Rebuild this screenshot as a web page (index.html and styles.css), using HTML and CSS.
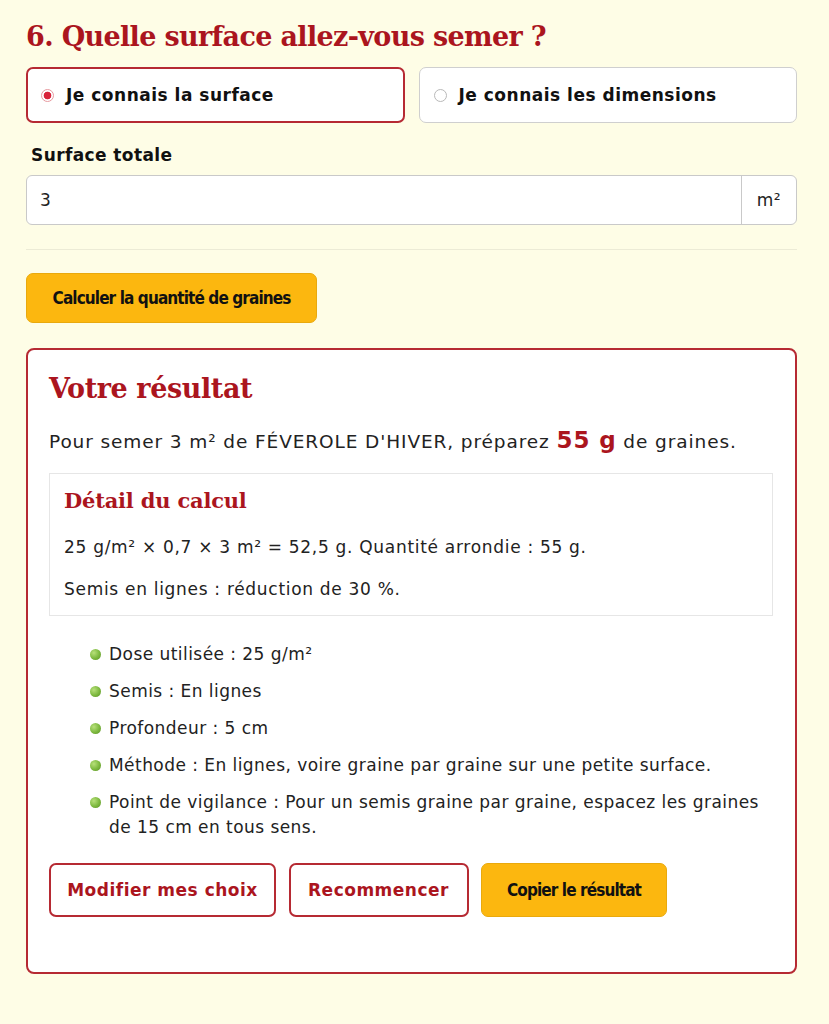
FILE: index.html
```html
<!DOCTYPE html>
<html lang="fr">
<head>
<meta charset="utf-8">
<title>Quelle surface allez-vous semer ?</title>
<link rel="stylesheet" href="styles.css">
</head>
<body>
<main class="wrap">
  <h2 class="step-title">6. Quelle surface allez-vous semer ?</h2>

  <div class="choices">
    <label class="choice is-selected">
      <span class="radio radio-on"></span>
      <span class="choice-text">Je connais la surface</span>
    </label>
    <label class="choice">
      <span class="radio"></span>
      <span class="choice-text">Je connais les dimensions</span>
    </label>
  </div>

  <div class="field">
    <div class="field-label">Surface totale</div>
    <div class="input-group">
      <div class="input">3</div>
      <div class="addon">m²</div>
    </div>
  </div>

  <hr class="divider">

  <button class="btn btn-primary btn-calc">Calculer la quantité de graines</button>

  <section class="result">
    <h2 class="result-title">Votre résultat</h2>
    <p class="result-summary">Pour semer 3 m² de FÉVEROLE D'HIVER, préparez <strong class="qty">55 g</strong> de graines.</p>

    <div class="detail">
      <h3 class="detail-title">Détail du calcul</h3>
      <p>25 g/m² × 0,7 × 3 m² = 52,5 g. Quantité arrondie : 55 g.</p>
      <p>Semis en lignes : réduction de 30 %.</p>
    </div>

    <ul class="facts">
      <li>Dose utilisée : 25 g/m²</li>
      <li>Semis : En lignes</li>
      <li>Profondeur : 5 cm</li>
      <li>Méthode : En lignes, voire graine par graine sur une petite surface.</li>
      <li>Point de vigilance : Pour un semis graine par graine, espacez les graines de 15 cm en tous sens.</li>
    </ul>

    <div class="actions">
      <button class="btn btn-outline btn-modify">Modifier mes choix</button>
      <button class="btn btn-outline btn-restart">Recommencer</button>
      <button class="btn btn-primary btn-copy">Copier le résultat</button>
    </div>
  </section>
</main>
</body>
</html>
```

FILE: styles.css
```css
html, body {
  margin: 0;
  padding: 0;
}
body {
  background: #fefde6;
  font-family: "DejaVu Sans", Verdana, sans-serif;
  color: #222;
}
.wrap {
  width: 771px;
  margin-left: 26px;
  padding-top: 18px;
  padding-bottom: 51px;
}
.step-title {
  font-family: "DejaVu Serif", Georgia, serif;
  font-weight: bold;
  font-size: 27px;
  color: #ab151e;
  margin: 0 0 11px 0;
  line-height: 38px;
  letter-spacing: -0.65px;
}
.choices {
  display: grid;
  grid-template-columns: 1fr 1fr;
  gap: 14px;
}
.choice {
  display: flex;
  align-items: center;
  gap: 12px;
  height: 56px;
  box-sizing: border-box;
  background: #fff;
  border: 1px solid #cfcfcf;
  border-radius: 7px;
  padding: 0 0 0 14px;
}
.choice.is-selected {
  border: 2px solid #b62a33;
  padding-left: 13px;
}
.radio {
  width: 13px;
  height: 13px;
  border-radius: 50%;
  border: 1px solid #b9b9b9;
  box-sizing: border-box;
  background: #fff;
  flex: none;
}
.radio-on {
  border: 1px solid #e79aa0;
  background: radial-gradient(circle, #d8233a 0 3.5px, #fff 4.2px);
}
.choice-text {
  font-weight: bold;
  font-size: 17px;
  letter-spacing: 0.5px;
  color: #111;
}
.field {
  margin-top: 22px;
}
.field-label {
  font-weight: bold;
  font-size: 17px;
  letter-spacing: 0.4px;
  color: #111;
  margin: 0 0 10px 5px;
  line-height: 20px;
}
.input-group {
  display: flex;
  height: 50px;
  box-sizing: border-box;
  border: 1px solid #c9c9c9;
  border-radius: 6px;
  background: #fff;
  overflow: hidden;
}
.input {
  flex: 1;
  display: flex;
  align-items: center;
  padding-left: 13px;
  font-size: 17px;
  color: #222;
}
.addon {
  width: 54px;
  border-left: 1px solid #c9c9c9;
  display: flex;
  align-items: center;
  justify-content: center;
  font-size: 17px;
  letter-spacing: 0.5px;
  color: #222;
}
.divider {
  border: 0;
  border-top: 1px solid #ecebd6;
  margin: 24px 0 23px 0;
}
.btn {
  font: inherit;
  border-radius: 7px;
  cursor: pointer;
  box-sizing: border-box;
  padding: 0;
}
.btn-primary {
  background: #fcb70f;
  border: 1px solid #e9a90d;
  color: #111;
  font-family: "DejaVu Sans Condensed", "DejaVu Sans", sans-serif;
  font-stretch: condensed;
  font-weight: bold;
  font-size: 17px;
  letter-spacing: -0.9px;
}
.btn-calc {
  height: 50px;
  width: 291px;
}
.btn-outline {
  background: #fff;
  border: 2px solid #b62a33;
  color: #ab151e;
  font-weight: bold;
  font-size: 17px;
  letter-spacing: 0.5px;
  height: 54px;
}
.result {
  margin-top: 25px;
  background: #fff;
  border: 2px solid #b62a33;
  border-radius: 8px;
  padding: 20px 22px 55px 21px;
}
.result-title {
  font-family: "DejaVu Serif", Georgia, serif;
  font-weight: bold;
  font-size: 27px;
  color: #ab151e;
  margin: 0;
  line-height: 38px;
  letter-spacing: -0.4px;
}
.result-summary {
  font-size: 18.5px;
  letter-spacing: 0.9px;
  margin: 18px 0 17px 0;
  line-height: 28px;
}
.qty {
  color: #ab151e;
  font-size: 23px;
}
.detail {
  border: 1px solid #e6e6e6;
  padding: 13px 14px 13px 14px;
}
.detail-title {
  font-family: "DejaVu Serif", Georgia, serif;
  font-weight: bold;
  font-size: 21px;
  color: #ab151e;
  margin: 0 0 20px 0;
  line-height: 28px;
  letter-spacing: -0.2px;
}
.detail p {
  font-size: 17px;
  letter-spacing: 0.7px;
  margin: 0 0 17px 0;
  line-height: 25px;
}
.detail p:last-child {
  margin-bottom: 0;
}
.facts {
  list-style: none;
  margin: 26px 0 0 0;
  padding: 0 0 0 40px;
}
.facts li {
  position: relative;
  padding-left: 20px;
  font-size: 17px;
  letter-spacing: 0.45px;
  line-height: 25px;
  margin-bottom: 12px;
}
.facts li::before {
  content: "";
  position: absolute;
  left: 1px;
  top: 7px;
  width: 11px;
  height: 11px;
  border-radius: 50%;
  background: radial-gradient(circle at 35% 35%, #b7e07a 0, #7cb83e 55%, #5b8f26 100%);
}
.actions {
  display: flex;
  gap: 12.5px;
  margin-top: 23px;
}
.btn-modify { width: 227px; }
.btn-restart { width: 180px; }
.btn-copy { width: 186px; height: 54px; }
```
